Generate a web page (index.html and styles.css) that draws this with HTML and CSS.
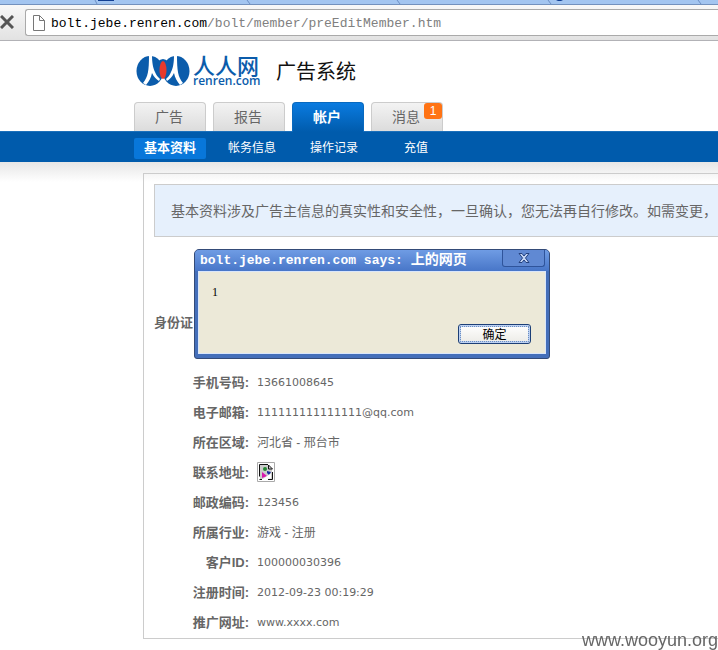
FILE: index.html
```html
<!DOCTYPE html>
<html lang="zh-CN">
<head>
<meta charset="UTF-8">
<meta name="viewport" content="width=device-width, initial-scale=1.0">
<title>人人网 广告系统</title>
<link rel="stylesheet" href="styles.css">
</head>
<body>
    <div class="browser">
        <div class="tabstrip">
            <svg width="718" height="4" viewBox="0 0 718 4">
                <path d="M95 0l2 4M247 0l3 4M397 0l3 4M548 0l3 4M698 0l3 4" stroke="#6d8fc4" fill="none"/>
                <path d="M98 0h16v1H98zM556 0h7l-2 1h-3z" fill="#123f93"/>
            </svg>
        </div>
        <div class="toolbar">
            <button class="stop" aria-label="停止">
                <svg width="14" height="14" viewBox="0 0 14 14"><path d="M1 1l12 12M13 1L1 13" stroke="#555" stroke-width="3"/></svg>
            </button>
            <div class="address">
                <svg width="12" height="16" viewBox="0 0 12 16"><path d="M.5.5h6l5 5v10H.5zM6.500.5v5h5" fill="#fff" stroke="#777"/></svg>
                <div class="url"><b>bolt.jebe.renren.com</b>/bolt/member/preEditMember.htm</div>
            </div>
        </div>
    </div>

    <header class="header">
        <a class="logo" href="#">
            <svg width="54" height="32" viewBox="0 0 54 32">
                <g fill="#0b5cab">
                    <ellipse cx="14" cy="16" rx="13.500" ry="15"/>
                    <ellipse cx="40" cy="16" rx="13.500" ry="15"/>
                    <ellipse cx="27" cy="13" rx="7" ry="9"/>
                </g>
                <g fill="#fff">
                    <path d="M13 0h3c0 8 1 13 3 17 1 3 3 5 5 7l-1 2c-3-2-5-4-7-8-1 5-3 8-6 12l-3-2c5-6 6-12 6-28z"/>
                    <path d="M41 0h-3c0 8-1 13-3 17-1 3-3 5-5 7l1 2c3-2 5-4 7-8 1 5 3 8 6 12l3-2c-5-6-6-12-6-28z"/>
                    <path d="M27 22l4 10h-8z"/>
                </g>
                <ellipse cx="27" cy="15" rx="3.500" ry="9" fill="#e8392b"/>
            </svg>
            <span class="logo-text">
                <span class="logo-cn">人人网</span>
                <span class="logo-en">renren.com</span>
            </span>
        </a>
        <h1 class="system">广告系统</h1>
    </header>
    <nav class="tabs">
        <a href="#">广告</a>
        <a href="#">报告</a>
        <a class="current" href="#">帐户</a>
        <a href="#">消息<span class="badge">1</span></a>
    </nav>
    <nav class="subnav">
        <a class="current" href="#">基本资料</a>
        <a href="#">帐务信息</a>
        <a href="#">操作记录</a>
        <a href="#">充值</a>
    </nav>

    <main class="main">
        <div class="panel">
            <p class="notice">基本资料涉及广告主信息的真实性和安全性，一旦确认，您无法再自行修改。如需变更，</p>
            <dl class="info">
                <dt class="idcard">身份证</dt><dd></dd>
                <dt>手机号码:</dt><dd>13661008645</dd>
                <dt>电子邮箱:</dt><dd>111111111111111@qq.com</dd>
                <dt>所在区域:</dt><dd class="cn">河北省 - 邢台市</dd>
                <dt>联系地址:</dt>
                <dd>
                    <svg class="broken" width="18" height="20" viewBox="0 0 18 20">
                        <path d="M.5.5h17v19H.5z" fill="#fff" stroke="#aaa"/>
                        <path d="M3 3h8l4 4v10H3z" fill="#ccc"/>
                        <path d="M11 2.500H2.500v12M2.500 17.500H5M11 17.500h4.500V10M15.500 7l-4-4v4h4" fill="none" stroke="#111"/>
                        <circle cx="8" cy="7" r="2" fill="#268a35"/>
                        <path d="M5 10l5 4-5 2z" fill="#d718ae"/>
                        <path d="M10 9l4 1-2 3-2-2z" fill="#172b9d"/>
                        <path d="M5 17.500l9-6v5z" fill="#fff"/>
                    </svg>
                </dd>
                <dt>邮政编码:</dt><dd>123456</dd>
                <dt>所属行业:</dt><dd class="cn">游戏 - 注册</dd>
                <dt>客户ID:</dt><dd>100000030396</dd>
                <dt>注册时间:</dt><dd>2012-09-23 00:19:29</dd>
                <dt>推广网址:</dt><dd>www.xxxx.com</dd>
            </dl>
        </div>
    </main>

    <dialog class="alert" open>
        <div class="alert-title">
            <span>bolt.jebe.renren.com says: <span class="alert-cn">上的网页</span></span>
            <button class="close" aria-label="关闭">
                <svg width="12" height="10" viewBox="0 0 12 10">
                    <path d="M1 .5h3l2 2.500 2-2.500h3L7.500 5 11 9.500H8L6 7 4 9.500H1L4.500 5z" fill="#c3d4f4" stroke="#24427f"/>
                </svg>
            </button>
        </div>
        <div class="alert-body">
            <p>1</p>
            <button class="ok">确定</button>
        </div>
    </dialog>

    <div class="watermark">www.wooyun.org</div>
</body>
</html>
```
FILE: styles.css
```css
*{
    box-sizing: border-box;
}
body{
    margin: 0;
    background: #fff;
    color: #666;
    font: 12px/20px "Liberation Sans", "Noto Sans CJK SC", sans-serif;
    overflow: hidden;
}
a{
    color: inherit;
    text-decoration: none;
}
button{
    padding: 0;
    cursor: pointer;
}

/* browser */
.tabstrip{
    height: 5px;
    background: #a3c5f0;
    border-bottom: 1px solid #7391bd;
    overflow: hidden;
}
.tabstrip svg{
    display: block;
}
.toolbar{
    display: flex;
    height: 36px;
    padding-top: 4px;
    background: linear-gradient(#f8f8f8, #e2e2e2);
    border-bottom: 1px solid #b2b2b6;
}
.stop{
    width: 25px;
    height: 26px;
    border: 0;
    background: none;
    text-align: left;
}
.stop svg{
    display: block;
}
.address{
    display: flex;
    flex: 1;
    align-items: center;
    gap: 6px;
    height: 27px;
    padding-left: 7px;
    background: #fff;
    border: 1px solid #aaa;
    border-right: 0;
    border-radius: 3px 0 0 3px;
}
.url{
    padding-top: 3px;
    color: #808080;
    font: 13px/20px "Liberation Mono", monospace;
}
.url b{
    color: #000;
    font-weight: normal;
}

/* header */
.header{
    display: flex;
    height: 61px;
    padding: 14px 0 0 136px;
}
.logo{
    display: flex;
    gap: 3px;
    width: 140px;
    color: #0b5cab;
}
.logo-text{
    display: flex;
    flex-direction: column;
}
.logo-cn{
    height: 18px;
    font: 500 22px/18px "Noto Sans CJK SC", sans-serif;
}
.logo-en{
    height: 16px;
    font: 600 12px/16px "Open Sans", sans-serif;
}
.system{
    margin: 0;
    color: #111;
    font: 20px/32px "Noto Sans CJK SC", sans-serif;
}
.tabs{
    display: flex;
    gap: 7px;
    height: 29px;
    padding-left: 134px;
}
.tabs a{
    position: relative;
    width: 72px;
    height: 29px;
    padding-right: 2px;
    border: 1px solid #ccc;
    border-bottom: 0;
    border-radius: 4px 4px 0 0;
    background: linear-gradient(#f3f3f3, #dcdcdc);
    font-size: 14px;
    line-height: 28px;
    text-align: center;
}
.tabs .current{
    height: 30px;
    border-color: #0869bf;
    background: linear-gradient(#0a7be0, #005bac);
    color: #fff;
    font-weight: bold;
}
.tabs .badge{
    position: absolute;
    top: 0;
    right: 0;
    width: 18px;
    height: 16px;
    border-radius: 3px;
    background: #ff7314;
    color: #fff;
    font-size: 12px;
    line-height: 16px;
}
.subnav{
    display: flex;
    gap: 10px;
    height: 31px;
    padding: 6px 0 0 134px;
    background: #005bac;
    border-top: 1px solid #1b70bb;
    color: #fff;
}
.subnav a{
    width: 72px;
    height: 21px;
    line-height: 20px;
    text-align: center;
}
.subnav .current{
    border-radius: 2px;
    background: #0877da;
    font-size: 13px;
    font-weight: bold;
}

/* content */
.main{
    padding: 11px 0 12px 143px;
    background: linear-gradient(#e6e6e6, #fff 20px);
}
.panel{
    padding: 10px 0 0 10px;
    border: 1px solid #ccc;
    border-right: 0;
}
.notice{
    margin: 0;
    padding: 16px 0 15px 16px;
    background: #e6f0fc;
    border: 1px solid #ccc;
    border-right: 0;
    font-size: 14px;
    line-height: 20px;
    white-space: nowrap;
    overflow: hidden;
}
.info{
    display: grid;
    grid-template-columns: 95px 1fr;
    column-gap: 8px;
    margin: 71px 0 0;
    line-height: 30px;
}
.info dt{
    font-size: 13px;
    font-weight: bold;
    text-align: right;
}
.info .idcard{
    margin-bottom: 30px;
    text-align: left;
}
.info dd{
    height: 30px;
    margin: 0;
    font-family: "DejaVu Sans", sans-serif;
    font-size: 11px;
}
.info .cn{
    font-family: "Liberation Sans", "Noto Sans CJK SC", sans-serif;
    font-size: 12px;
}
.broken{
    display: block;
    margin-top: 4px;
}

/* alert */
.alert{
    position: absolute;
    top: 249px;
    left: 194px;
    width: 356px;
    margin: 0;
    padding: 0 3px 4px;
    border: 1px solid #344b78;
    border-radius: 5px 5px 3px 3px;
    background: #446fba;
    color: #000;
}
.alert-title{
    display: flex;
    justify-content: space-between;
    height: 21px;
    margin: 0 -3px;
    padding: 0 4px 0 5px;
    border-radius: 4px 4px 0 0;
    background: linear-gradient(#6f9ce4, #4876c8);
    color: #fff;
    font: bold 13px/20px "Liberation Mono", "Noto Sans CJK SC", monospace;
    white-space: pre;
}
.alert-cn{
    font-size: 14px;
}
.close{
    display: flex;
    align-items: center;
    justify-content: center;
    width: 43px;
    height: 17px;
    border: 1px solid #2f549b;
    border-top: 0;
    border-radius: 0 0 3px 3px;
    background: #6089d3;
}
.alert-body{
    display: flex;
    flex-direction: column;
    height: 83px;
    padding: 10px 14px 9px 13px;
    background: #ece9d8;
    border: 1px solid #d9e6fb;
}
.alert-body p{
    margin: 0;
    font-family: "Liberation Serif", serif;
}
.ok{
    width: 73px;
    height: 20px;
    margin: auto 0 0 auto;
    border: 1px solid #1c3f77;
    border-radius: 3px;
    outline: 1px dotted #6d8fc0;
    outline-offset: -3px;
    background: linear-gradient(#fff, #ecebe6);
    box-shadow: inset 0 0 0 2px #bdd1f2;
    color: #000;
    font: 12px/16px "Noto Sans CJK SC", sans-serif;
}

.watermark{
    position: fixed;
    right: 0;
    bottom: 0;
    color: #666;
    font-size: 18px;
}
```
